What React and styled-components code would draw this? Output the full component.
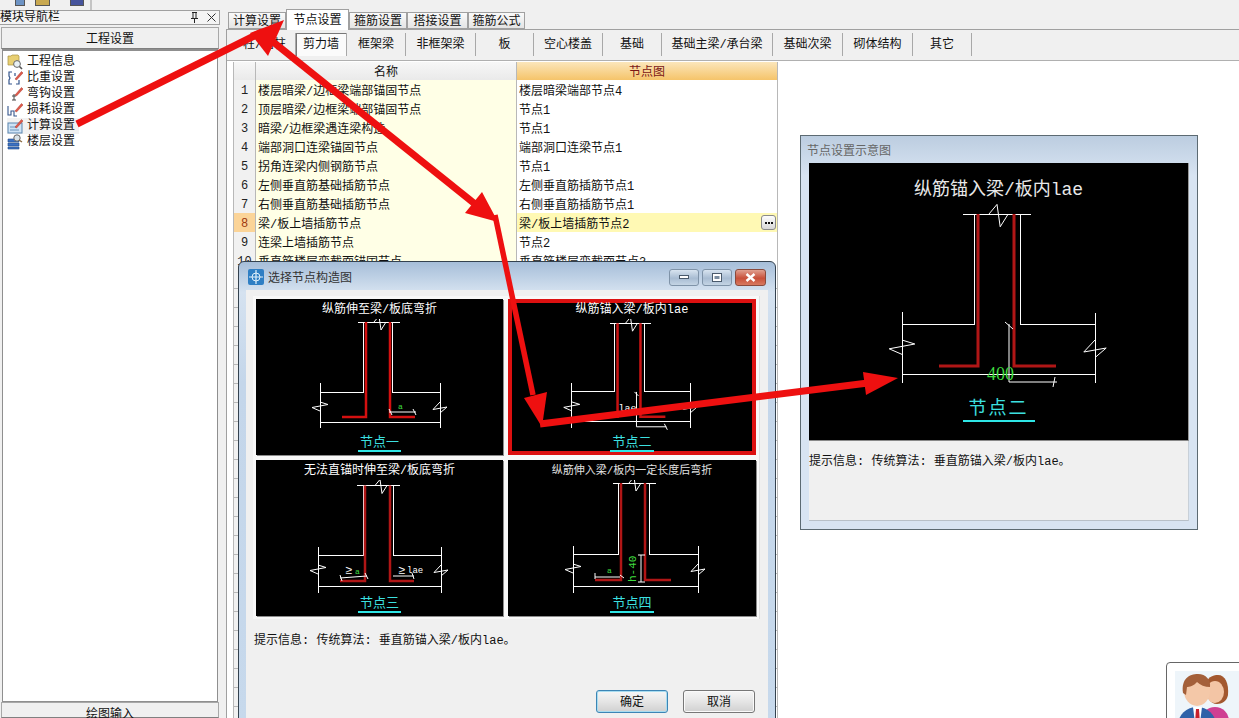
import React from 'react'
import styled, { createGlobalStyle } from 'styled-components'

const FONT = `"Liberation Mono", "Noto Sans CJK SC", monospace`

const sideItems = ['工程信息', '比重设置', '弯钩设置', '损耗设置', '计算设置', '楼层设置']
const topTabs = [
  { label: '计算设置', w: 58 },
  { label: '节点设置', w: 63, active: true },
  { label: '箍筋设置', w: 58 },
  { label: '搭接设置', w: 61 },
  { label: '箍筋公式', w: 57 },
]
const subTabs = [
  { label: '柱/墙柱', w: 62 },
  { label: '剪力墙', w: 51, active: true },
  { label: '框架梁', w: 59 },
  { label: '非框架梁', w: 70 },
  { label: '板', w: 58 },
  { label: '空心楼盖', w: 69 },
  { label: '基础', w: 59 },
  { label: '基础主梁/承台梁', w: 111 },
  { label: '基础次梁', w: 70 },
  { label: '砌体结构', w: 70 },
  { label: '其它', w: 59 },
]
const rows = [
  ['楼层暗梁/边框梁端部锚固节点', '楼层暗梁端部节点4'],
  ['顶层暗梁/边框梁端部锚固节点', '节点1'],
  ['暗梁/边框梁遇连梁构造', '节点1'],
  ['端部洞口连梁锚固节点', '端部洞口连梁节点1'],
  ['拐角连梁内侧钢筋节点', '节点1'],
  ['左侧垂直筋基础插筋节点', '左侧垂直筋插筋节点1'],
  ['右侧垂直筋基础插筋节点', '右侧垂直筋插筋节点1'],
  ['梁/板上墙插筋节点', '梁/板上墙插筋节点2'],
  ['连梁上墙插筋节点', '节点2'],
  ['垂直筋楼层变截面锚固节点', '垂直筋楼层变截面节点3'],
  ...Array.from({ length: 24 }, () => ['', '']),
]

const GlobalStyle = createGlobalStyle`
  html, body { margin: 0; padding: 0; background: #f0f0f0; }
  * { box-sizing: border-box; }
`

const Root = styled.div`
  position: relative;
  width: 1239px;
  height: 718px;
  overflow: hidden;
  display: flex;
  flex-direction: column;
  background: #f0f0f0;
  color: #111;
  font: 12px/16px ${FONT};
`
const Toolbar = styled.div`
  height: 10px;
  display: flex;
  align-items: flex-start;
  padding-left: 15px;
`
const ToolGlyph = styled.i`
  display: block;
  width: ${p => p.$w}px;
  height: 6px;
  margin-right: ${p => p.$gap}px;
  background: ${p => p.$color};
  border: 1px solid #555;
  border-top: 0;
`
const ToolSep = styled.i`
  display: block;
  width: 2px;
  height: 10px;
  margin-left: 6px;
  background: #c4c4c4;
`
const Body = styled.div`
  flex: 1;
  min-height: 0;
  display: flex;
`
const Sidebar = styled.div`
  width: 220px;
  flex: none;
  display: flex;
  flex-direction: column;
`
const DockHead = styled.div`
  height: 15px;
  margin-bottom: 2px;
  display: flex;
  align-items: center;
  justify-content: space-between;
  padding-right: 3px;
  background: #f4f4f4;
  border: 1px solid #a0a0a0;
  border-left: 0;
  font-size: 12px;
`
const DockTools = styled.div`
  display: flex;
  gap: 8px;
  align-items: center;
`
const SectionBtn = styled.div`
  height: ${p => p.$h}px;
  flex: none;
  margin: 0 1px;
  display: flex;
  justify-content: center;
  padding-top: 4px;
  background: #f0f0f0;
  border: 1px solid #a8a8a8;
  border-bottom-color: #808080;
`
const NavList = styled.div`
  flex: 1;
  margin: 0 2px;
  padding: 3px 0 0 4px;
  background: #fff;
  border: 1px solid #8f8f8f;
  border-top-width: 2px;
`
const NavRow = styled.div`
  height: 16px;
  display: flex;
  align-items: center;
  gap: 4px;
  background: ${p => (p.$hot ? '#f2f2f2' : 'transparent')};
  width: 72px;
`
const Main = styled.div`
  flex: 1;
  min-width: 0;
  margin-left: 6px;
  display: flex;
  flex-direction: column;
`
const TabStrip = styled.div`
  height: 19px;
  flex: none;
  display: flex;
  align-items: flex-end;
  padding-left: 2px;
`
const TopTab = styled.div`
  width: ${p => p.$w}px;
  height: ${p => (p.$active ? 21 : 17)}px;
  margin-bottom: ${p => (p.$active ? -1 : 0)}px;
  padding-top: ${p => (p.$active ? 2 : 3)}px;
  display: flex;
  align-items: center;
  justify-content: center;
  position: relative;
  background: ${p => (p.$active ? '#fff' : 'linear-gradient(#fafafa, #e4e4e4)')};
  border: 1px solid #a0a0a0;
  border-bottom: ${p => (p.$active ? 0 : '1px solid #a0a0a0')};
`
const TabPanel = styled.div`
  flex: 1;
  min-height: 0;
  background: #fff;
  border-left: 1px solid #a0a0a0;
  border-top: 1px solid #a0a0a0;
  overflow: hidden;
`
const SubBar = styled.div`
  height: 31px;
  padding: 2px 0 0 7px;
  display: flex;
  background: #f0f0f0;
  border-bottom: 1px solid #b0b0b0;
`
const SubTab = styled.div`
  width: ${p => p.$w}px;
  height: 23px;
  margin-top: 1px;
  display: flex;
  align-items: center;
  justify-content: center;
  white-space: nowrap;
  border-right: 1px solid #a8a8a8;
  background: ${p => (p.$active ? '#fbfbfb' : 'transparent')};
  box-shadow: ${p => (p.$active ? 'inset 1px 1px 0 #777' : 'none')};
`
const Table = styled.div`
  margin: 1px 0 0 6px;
  width: 545px;
  border-left: 1px solid #b8b8b8;
`
const TableRow = styled.div`
  display: grid;
  grid-template-columns: 22px 261px 261px;
  height: ${p => (p.$head ? 18 : 19)}px;
`
const HeadCell = styled.div`
  display: flex;
  align-items: center;
  justify-content: center;
  padding-top: 3px;
  color: ${p => (p.$hot ? '#7a1616' : '#111')};
  background: ${p => (p.$hot ? 'linear-gradient(#fbe6bb, #f5c265)' : 'linear-gradient(#f7f7f7, #e9e9e9)')};
  border-right: 1px solid #b8b8b8;
  border-bottom: 1px solid #b0b0b0;
`
const NumCell = styled.div`
  display: flex;
  align-items: center;
  justify-content: center;
  padding-top: 2px;
  color: ${p => (p.$hot ? '#a03a10' : '#222')};
  background: ${p => (p.$hot ? '#fbd498' : '#f1f1f1')};
  border-right: 1px solid #b8b8b8;
  border-bottom: 1px solid #b8b8b8;
`
const TextCell = styled.div`
  position: relative;
  padding: 4px 0 0 2px;
  display: flex;
  align-items: center;
  white-space: nowrap;
  background: ${p => p.$bg};
  border-right: 1px solid #b8b8b8;
  border-bottom: 1px solid #b8b8b8;
`
const MoreBtn = styled.div`
  position: absolute;
  right: 1px;
  top: 2px;
  width: 15px;
  height: 15px;
  display: flex;
  align-items: center;
  justify-content: center;
  gap: 1px;
  background: linear-gradient(#fdfdfd, #d8d8d8);
  border: 1px solid #8a8a8a;
  border-radius: 3px;
`
const Dot = styled.i`
  width: 2px;
  height: 2px;
  background: #111;
`

/* floating windows */
const Dialog = styled.div`
  position: absolute;
  left: 238px;
  top: 261px;
  width: 538px;
  height: 470px;
  border: 1px solid #34424f;
  border-radius: 6px 6px 0 0;
  background: linear-gradient(#a6bed9 0, #d5e2f0 30px, #c4d6ea 120px, #c7d9ec 100%);
  display: flex;
  flex-direction: column;
`
const DialogBar = styled.div`
  height: 28px;
  flex: none;
  display: flex;
  align-items: center;
  padding: 2px 9px 0 9px;
  gap: 4px;
  color: #333;
`
const DialogTitle = styled.span`
  padding-top: 4px;
`
const WinBtns = styled.div`
  margin-left: auto;
  display: flex;
  gap: 3px;
`
const WinBtn = styled.div`
  width: ${p => (p.$close ? 31 : 30)}px;
  height: 17px;
  display: flex;
  align-items: center;
  justify-content: center;
  border: 1px solid ${p => (p.$close ? '#8a4a3c' : '#7f93a8')};
  border-radius: 3px;
  background: ${p => (p.$close ? 'linear-gradient(#e0a090, #c8503a 55%, #d87a60)' : 'linear-gradient(#d8e4f0, #a8bcd2 55%, #c4d4e4)')};
`
const DialogBody = styled.div`
  flex: 1;
  margin: 0 7px;
  padding: 6px 8px 0 7px;
  background: #f0f0f0;
  display: flex;
  flex-direction: column;
`
const PanelFrame = styled.div`
  display: grid;
  grid-template-columns: 247px 248px;
  grid-auto-rows: 156px;
  gap: 5px;
  padding: 3px;
  width: 507px;
  background: #f8f8f8;
  border-right: 1px solid #e0e0e0;
`
const NodePanel = styled.div`
  background: #000;
  display: flex;
  flex-direction: column;
  align-items: center;
  box-shadow: ${p => (p.$picked ? 'inset 0 0 0 4px #dc1010' : '1px 1px 0 #8c8c8c')};
`
const NodeTitle = styled.div`
  height: ${p => p.$h || 20}px;
  flex: none;
  padding-top: ${p => p.$top || 3}px;
  color: ${p => p.$color || '#fff'};
  font-size: ${p => p.$size || 12}px;
  line-height: ${p => p.$line || 16}px;
  white-space: nowrap;
`
const NodeLabel = styled.div`
  margin-top: ${p => p.$top || 0}px;
  padding: 2px ${p => p.$pad || 2}px 0;
  color: #3ce0e0;
  font-size: ${p => p.$size || 13}px;
  line-height: ${p => p.$line || 14}px;
  letter-spacing: ${p => p.$space || 0}px;
  border-bottom: 2px solid #2ee6e6;
`
const DrawSvg = styled.svg`
  display: block;
  flex: none;
`
const DimText = styled.text`
  fill: ${p => p.$fill || '#3fdc3f'};
  font-family: ${p => (p.$serif ? '"Liberation Serif", serif' : '"Liberation Mono", monospace')};
  font-size: ${p => p.$size || 10}px;
`
const Prompt = styled.div`
  margin-top: ${p => p.$top}px;
  margin-left: 1px;
  white-space: nowrap;
  line-height: 20px;
`
const DialogFoot = styled.div`
  margin-top: 39px;
  display: flex;
  justify-content: flex-end;
  gap: 15px;
  padding-right: 5px;
`
const FootBtn = styled.div`
  width: 72px;
  height: 23px;
  padding-top: 2px;
  display: flex;
  align-items: center;
  justify-content: center;
  border: 1px solid ${p => (p.$primary ? '#3c85b5' : '#777')};
  border-radius: 3px;
  background: linear-gradient(#f6f6f6, #e6e6e6 48%, #d0d0d0);
  box-shadow: ${p => (p.$primary ? 'inset 0 0 0 1px #a8dcf0' : 'inset 0 0 0 1px #fafafa')};
`
const Preview = styled.div`
  position: absolute;
  left: 800px;
  top: 135px;
  width: 398px;
  height: 395px;
  padding: 0 8px;
  border: 1px solid #5c6a72;
  background: linear-gradient(#bccde0, #d8e4f2 40px);
  display: flex;
  flex-direction: column;
`
const PreviewTitle = styled.div`
  height: 27px;
  flex: none;
  margin-left: -2px;
  padding-top: 8px;
  color: #666;
`
const PreviewStage = styled.div`
  height: 278px;
  flex: none;
  background: #000;
  border-right: 1px solid #999;
  border-bottom: 1px solid #888;
  display: flex;
  flex-direction: column;
  align-items: center;
`
const PreviewInfo = styled.div`
  flex: none;
  height: 80px;
  padding: 13px 0 0 0;
  background: #f0f0f0;
  border-right: 1px solid #c8d0d8;
  border-bottom: 1px solid #b8c0c8;
  white-space: nowrap;
`
const AvatarCard = styled.div`
  position: absolute;
  left: 1166px;
  top: 662px;
  width: 90px;
  height: 70px;
  padding: 8px;
  background: #fff;
  border: 1px solid #666;
  border-radius: 4px 0 0 0;
`
const AvatarInner = styled.div`
  height: 60px;
  background: #eef5fa;
`
const ArrowLayer = styled.svg`
  position: absolute;
  left: 0;
  top: 0;
  pointer-events: none;
`

/* the wall-on-beam section drawing, shared by all node pictures */
const Section = ({ g, s = 1, view, width, height, children, bar = 2.5, red = '#b01616' }) => {
  const { top, tl, tr, wl, wr, rl, rr, sT, sB, sL, sR, eT, eB, eT2, barY, barL, barR, cx } = g
  return (
    <DrawSvg width={width} height={height} viewBox={view}>
      <g fill="none" stroke="#fff" strokeWidth="1" shapeRendering="crispEdges">
        <path d={`M${tl} ${top}H${tr}`} />
        <path d={`M${wl} ${top}V${sT}H${sL}M${wr} ${top}V${sT}H${sR}`} />
        <path d={`M${sL} ${sB}H${sR}M${sL} ${eT}V${eB}M${sR} ${eT2 ?? eT}V${eB}`} />
      </g>
      <g fill="none" stroke="#fff" strokeWidth="1">
        <path d={`M${cx - 5 * s} ${top}L${cx} ${top - 6 * s}L${cx + 2 * s} ${top + 8 * s}L${cx + 7 * s} ${top}`} />
        <path d={`M${sL} ${sT + 10 * s}L${sL + 8 * s} ${sT + 12.5 * s}L${sL - 8 * s} ${sT + 15.5 * s}L${sL} ${sT + 19 * s}`} />
        <path d={`M${sR} ${sT + 10 * s}L${sR - 7 * s} ${sT + 17.5 * s}L${sR + 7 * s} ${sT + 15 * s}L${sR} ${sT + 21 * s}`} />
      </g>
      <path
        d={`M${rl} ${top}V${barY}H${barL}M${rr} ${top}V${barY}H${barR}`}
        fill="none"
        stroke={red}
        strokeWidth={bar}
      />
      {children}
    </DrawSvg>
  )
}

const DimLine = ({ d }) => <path d={d} fill="none" stroke="#fff" strokeWidth="1" />

const PANEL_VIEW = '0 20 247 115'

const NodeOne = () => (
  <NodePanel>
    <NodeTitle>纵筋伸至梁/板底弯折</NodeTitle>
    <Section
      width={247}
      height={115}
      view={PANEL_VIEW}
      red="#d41010"
      g={{ top: 23, tl: 102, tr: 144, wl: 107, wr: 136, rl: 110, rr: 134, sT: 93, sB: 123, sL: 64, sR: 184, eT: 84, eB: 129, barY: 118, barL: 86, barR: 159, cx: 123 }}
    >
      <DimLine d="M133 113H160M133 110L136 116M157 110L160 116" />
      <DimText x="142" y="110" $size={8}>a</DimText>
    </Section>
    <NodeLabel>节点一</NodeLabel>
  </NodePanel>
)

const NodeTwo = () => (
  <NodePanel $picked>
    <NodeTitle>纵筋锚入梁/板内lae</NodeTitle>
    <Section
      width={246}
      height={115}
      view={PANEL_VIEW}
      red="#c81212"
      g={{ top: 24, tl: 101, tr: 143, wl: 106, wr: 136, rl: 109, rr: 132, sT: 93, sB: 123, sL: 63, sR: 182, eT: 84, eB: 129, barY: 118, barL: 86, barR: 157, cx: 122 }}
    >
      <DimLine d="M128 93V128H158M126 93L130 97M156 125L159 131" />
      <DimText x="110" y="112" $fill="#fff" $size={10}>lae</DimText>
    </Section>
    <NodeLabel>节点二</NodeLabel>
  </NodePanel>
)

const NodeThree = () => (
  <NodePanel>
    <NodeTitle>无法直锚时伸至梁/板底弯折</NodeTitle>
    <Section
      width={247}
      height={115}
      view={PANEL_VIEW}
      g={{ top: 25.5, tl: 101, tr: 144, wl: 107, wr: 137, rl: 109, rr: 134, sT: 95, sB: 126, sL: 62, sR: 185, eT: 87, eB: 133, barY: 121, barL: 84, barR: 158, cx: 124 }}
    >
      <DimLine d="M84 118L111 116M84 115L86 121M109 113L112 119M137 116H158M156 113L158 119" />
      <DimText x="89" y="114" $fill="#fff" $size={12}>≥</DimText>
      <DimText x="99" y="114" $size={8}>a</DimText>
      <DimText x="142" y="114" $fill="#fff" $size={12}>≥</DimText>
      <DimText x="151" y="113" $fill="#fff" $size={9}>lae</DimText>
    </Section>
    <NodeLabel>节点三</NodeLabel>
  </NodePanel>
)

const NodeFour = () => (
  <NodePanel>
    <NodeTitle $size={11} $color="#e0e0e0">纵筋伸入梁/板内一定长度后弯折</NodeTitle>
    <Section
      width={248}
      height={115}
      view="0 20 248 115"
      g={{ top: 23, tl: 105, tr: 148, wl: 110, wr: 141, rl: 113, rr: 137, sT: 94, sB: 126, sL: 65, sR: 190, eT: 86, eB: 133, barY: 120, barL: 87, barR: 163, cx: 126 }}
    >
      <DimLine d="M87 117H112M87 113V119M112 115L116 118M133 95V122M130 95H137M130 122H137" />
      <DimText x="99" y="113" $size={8}>a</DimText>
      <DimText x="0" y="0" $size={11} transform="translate(128 122) rotate(-90)">h-40</DimText>
    </Section>
    <NodeLabel>节点四</NodeLabel>
  </NodePanel>
)

const PinIcon = () => (
  <svg width="9" height="11" viewBox="0 0 9 11">
    <path d="M2 0.5H7M3 1V6M6 1V6M1 6.5H8M4.5 7V11" stroke="#222" fill="none" />
  </svg>
)
const CloseIcon = () => (
  <svg width="9" height="9" viewBox="0 0 9 9">
    <path d="M0.5 0.5L8.5 8.5M8.5 0.5L0.5 8.5" stroke="#333" fill="none" />
  </svg>
)

const Pencil = () => <path d="M8 9L14.5 1.5L16 3L9.5 10Z" fill="#e05a4a" stroke="#a83a30" strokeWidth="0.5" />

const NavIcon = ({ kind }) => (
  <svg width="16" height="16" viewBox="0 0 16 16" style={{ flex: 'none' }}>
    {kind === 0 && (
      <g>
        <path d="M1 2H4L5 1H11L12 2V11H1Z" fill="#e8cf72" stroke="#a89040" strokeWidth="0.7" />
        <circle cx="10" cy="10" r="3.4" fill="#e8f0f4" stroke="#666" />
        <path d="M12.5 12.5L15 15" stroke="#555" strokeWidth="1.6" />
      </g>
    )}
    {kind === 1 && (
      <g>
        <path d="M5 2H2V6L3 8L2 10V14H5M8 6V3M9 14H12V10" fill="none" stroke="#34558c" strokeWidth="1.2" />
        <Pencil />
      </g>
    )}
    {kind === 2 && (
      <g>
        <path d="M7 8V14M5 10H9M5 14H9" fill="none" stroke="#444" />
        <Pencil />
      </g>
    )}
    {kind === 3 && (
      <g>
        <path d="M1 4V13H4V9H7V14H10" fill="none" stroke="#34558c" strokeWidth="1.1" />
        <Pencil />
      </g>
    )}
    {kind === 4 && (
      <g>
        <rect x="1" y="5" width="14" height="10" fill="#cfe3f5" stroke="#5b86b0" />
        <path d="M3 9H10M3 12H12" stroke="#6a94bc" />
        <Pencil />
      </g>
    )}
    {kind === 5 && (
      <g>
        <path d="M1 5H12V8H1ZM1 9H12V12H1ZM1 13H12V15H1Z" fill="#3d72c4" stroke="#234a88" strokeWidth="0.6" />
        <circle cx="10" cy="4" r="3.2" fill="#d8e2e8" stroke="#666" />
        <path d="M12 6L15 8" stroke="#8a6a40" strokeWidth="1.4" />
      </g>
    )}
  </svg>
)

const DialogIcon = () => (
  <svg width="16" height="16" viewBox="0 0 16 16" style={{ flex: 'none' }}>
    <rect width="16" height="16" rx="2" fill="#2f7fc4" />
    <circle cx="8" cy="8" r="4" fill="none" stroke="#dff0fa" />
    <path d="M8 1V15M1 8H15" stroke="#dff0fa" strokeWidth="1.2" />
  </svg>
)

const People = () => (
  <svg width="64" height="52" viewBox="0 0 64 52">
    <ellipse cx="40" cy="50" rx="14" ry="14" fill="#cf3f92" />
    <path d="M31 16C31 6 38 4 43 4C50 4 54 12 53 24C52 30 47 33 42 33C35 33 31 26 31 16Z" fill="#a3582f" />
    <ellipse cx="40" cy="21" rx="9" ry="11" fill="#f3c5a5" />
    <ellipse cx="22" cy="54" rx="19" ry="18" fill="#2f62a8" />
    <path d="M18 36H27L25 52H20Z" fill="#fff" />
    <path d="M21 38H24L25 52H20Z" fill="#c8202c" />
    <ellipse cx="22" cy="20" rx="13" ry="15" fill="#f4c8a8" />
    <path d="M8 22C6 8 14 3 23 3C31 3 36 9 35 16C30 16 25 14 22 11C19 15 14 16 12 16L11 24Z" fill="#a4603a" />
  </svg>
)

const Arrows = () => (
  <ArrowLayer width="1239" height="718" viewBox="0 0 1239 718">
    <g fill="none" stroke="#ee1010">
      <path d="M77 124L262 32" strokeWidth="7" />
      <path d="M262 33L480 208" strokeWidth="7" />
      <path d="M495 215L533 395" strokeWidth="5.5" />
      <path d="M540 424L868 383" strokeWidth="7" />
    </g>
    <g fill="#ee1010">
      <polygon points="284,20 250,33 268,56" />
      <polygon points="498,222 465,213 482,192" />
      <polygon points="542,427 524,398 547,392" />
      <polygon points="898,378 863,372 866,395" />
    </g>
  </ArrowLayer>
)

const App = () => {
  return (
    <Root>
      <GlobalStyle />
      <Toolbar>
        <ToolGlyph $w={10} $gap={10} $color="#6d93c4" />
        <ToolGlyph $w={15} $gap={20} $color="#c8a850" />
        <ToolGlyph $w={14} $gap={0} $color="#46549c" />
        <ToolSep />
      </Toolbar>
      <Body>
        <Sidebar>
          <DockHead>
            模块导航栏
            <DockTools>
              <PinIcon />
              <CloseIcon />
            </DockTools>
          </DockHead>
          <SectionBtn $h={22}>工程设置</SectionBtn>
          <NavList>
            {sideItems.map((item, i) => (
              <NavRow key={item} $hot={i === 4}>
                <NavIcon kind={i} />
                {item}
              </NavRow>
            ))}
          </NavList>
          <SectionBtn $h={16}>绘图输入</SectionBtn>
        </Sidebar>
        <Main>
          <TabStrip>
            {topTabs.map(t => (
              <TopTab key={t.label} $w={t.w} $active={t.active}>{t.label}</TopTab>
            ))}
          </TabStrip>
          <TabPanel>
            <SubBar>
              {subTabs.map(t => (
                <SubTab key={t.label} $w={t.w} $active={t.active}>{t.label}</SubTab>
              ))}
            </SubBar>
            <Table>
              <TableRow $head>
                <HeadCell />
                <HeadCell>名称</HeadCell>
                <HeadCell $hot>节点图</HeadCell>
              </TableRow>
              {rows.map((r, i) => (
                <TableRow key={i}>
                  <NumCell $hot={i === 7}>{i < 10 ? i + 1 : ''}</NumCell>
                  <TextCell $bg="#ffffe6">{r[0]}</TextCell>
                  <TextCell $bg={i === 7 ? '#fff9b4' : '#fff'}>
                    {r[1]}
                    {i === 7 && (
                      <MoreBtn>
                        <Dot />
                        <Dot />
                        <Dot />
                      </MoreBtn>
                    )}
                  </TextCell>
                </TableRow>
              ))}
            </Table>
          </TabPanel>
        </Main>
      </Body>

      <Dialog>
        <DialogBar>
          <DialogIcon />
          <DialogTitle>选择节点构造图</DialogTitle>
          <WinBtns>
            <WinBtn>
              <svg width="10" height="6" viewBox="0 0 10 6"><rect x="0.5" y="1.5" width="9" height="3" fill="#fff" stroke="#4a5a6c" /></svg>
            </WinBtn>
            <WinBtn>
              <svg width="10" height="9" viewBox="0 0 10 9"><rect x="0.5" y="0.5" width="9" height="8" fill="#fff" stroke="#4a5a6c" /><rect x="2.5" y="3" width="5" height="3" fill="#7a8ca0" /></svg>
            </WinBtn>
            <WinBtn $close>
              <svg width="11" height="9" viewBox="0 0 11 9"><path d="M1.5 1L9.5 8M9.5 1L1.5 8" stroke="#fff" strokeWidth="2.4" /></svg>
            </WinBtn>
          </WinBtns>
        </DialogBar>
        <DialogBody>
          <PanelFrame>
            <NodeOne />
            <NodeTwo />
            <NodeThree />
            <NodeFour />
          </PanelFrame>
          <Prompt $top={12}>提示信息: 传统算法: 垂直筋锚入梁/板内lae。</Prompt>
          <DialogFoot>
            <FootBtn $primary>确定</FootBtn>
            <FootBtn>取消</FootBtn>
          </DialogFoot>
        </DialogBody>
      </Dialog>

      <Preview>
        <PreviewTitle>节点设置示意图</PreviewTitle>
        <PreviewStage>
          <NodeTitle $h={41} $top={13} $size={18} $line={28} $color="#e8e8e8">纵筋锚入梁/板内lae</NodeTitle>
          <Section
            s={1.6}
            bar={3}
            width={380}
            height={189}
            view="0 41 380 189"
            g={{ top: 51, tl: 154, tr: 222, wl: 165, wr: 211, rl: 169, rr: 205, sT: 161, sB: 211, sL: 93, sR: 286, eT: 149, eT2: 150, eB: 220, barY: 203, barL: 130, barR: 247, cx: 188 }}
          >
            <DimLine d="M200 161V219H248M196 159L204 166M246 214L244 224" />
            <DimText x="178" y="217" $serif $size={18}>400</DimText>
          </Section>
          <NodeLabel $top={3} $size={18} $line={22} $pad={6} $space={2}>节点二</NodeLabel>
        </PreviewStage>
        <PreviewInfo>提示信息: 传统算法: 垂直筋锚入梁/板内lae。</PreviewInfo>
      </Preview>

      <AvatarCard>
        <AvatarInner>
          <People />
        </AvatarInner>
      </AvatarCard>

      <Arrows />
    </Root>
  )
}

export default App
